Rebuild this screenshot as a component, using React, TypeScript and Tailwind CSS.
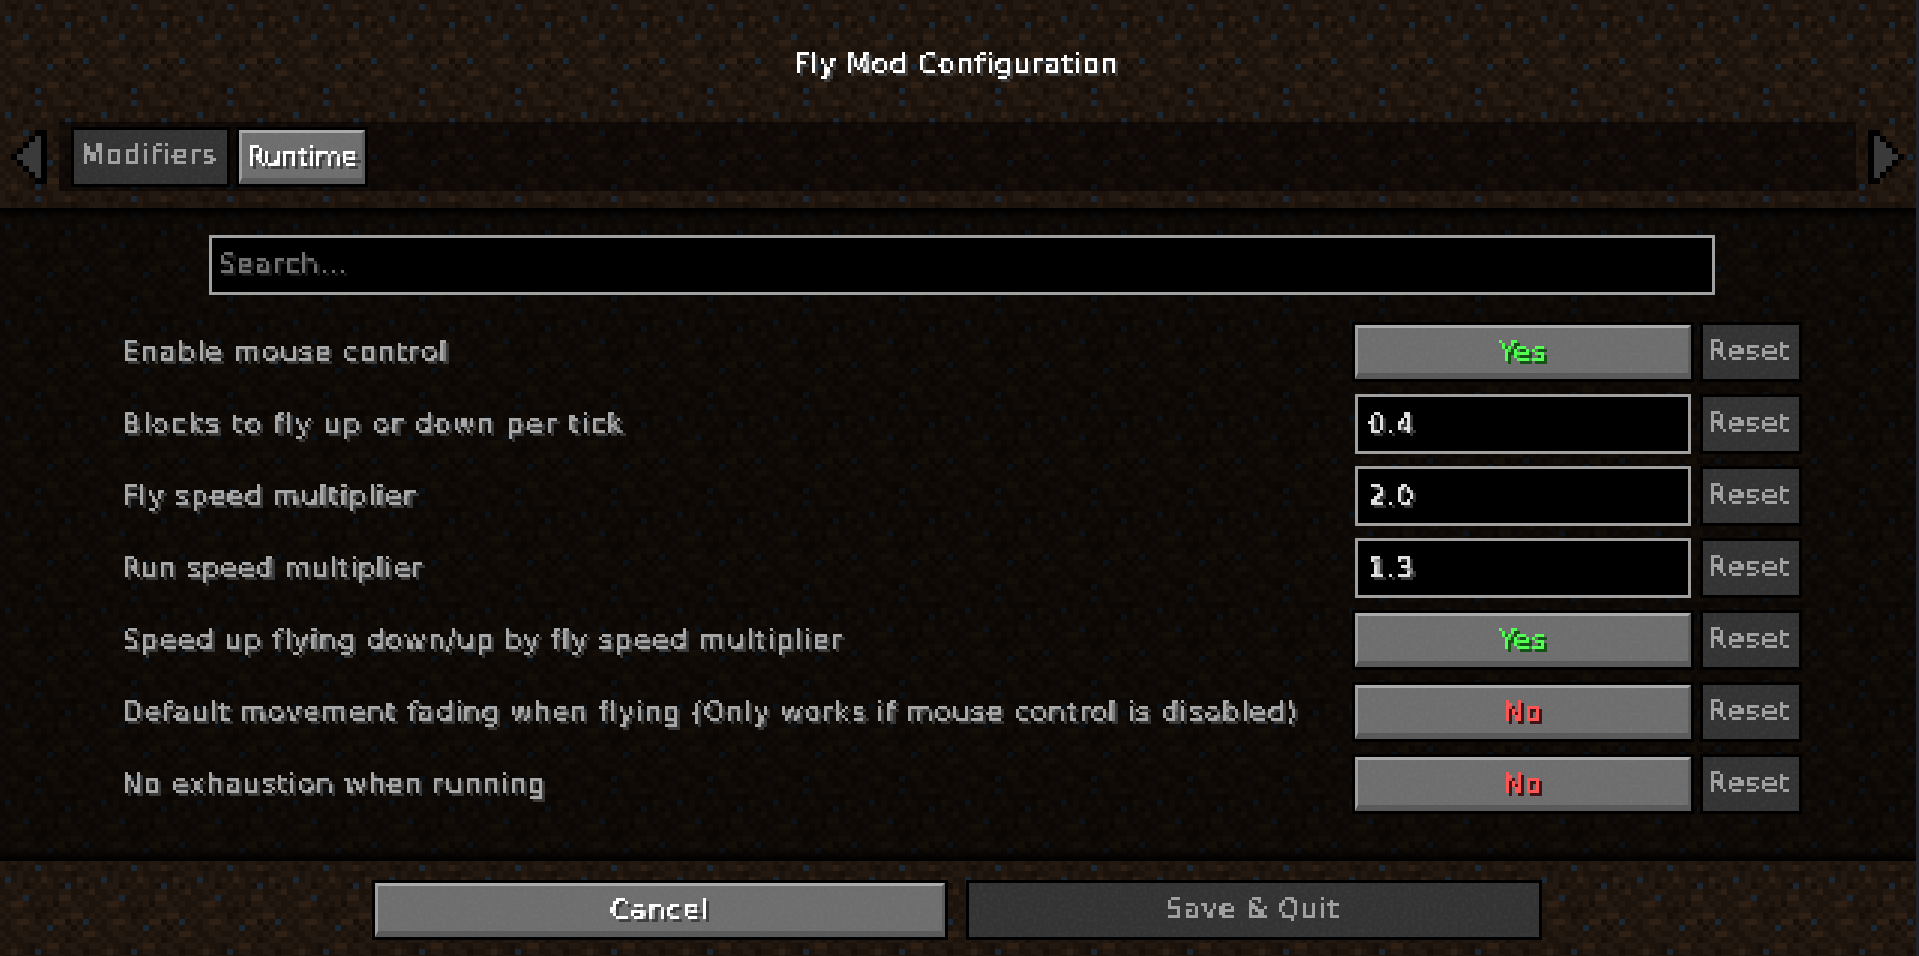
import React from "react";

const TILE = [
  "2101214212232121",
  "2212111211110112",
  "1412121321211321",
  "1222012121041202",
  "1121221111221123",
  "2112411221331211",
  "1233212120222121",
  "2122111012112211",
  "1211220121223312",
  "2123321213302141",
  "1122122141220212",
  "2112211212112133",
  "1211222121201221",
  "2121101233122112",
  "1232104122112201",
  "2121221112211212",
];
const COLORS: Record<string, string> = { "0": "#150e09", "1": "#1c130c", "2": "#241910", "3": "#2e2015", "4": "#1b2732" };

function Defs() {
  return (
    <svg className="absolute w-0 h-0" aria-hidden="true">
      <defs>
        <pattern id="dirt" x="-1" y="4" width="96" height="96" patternUnits="userSpaceOnUse">
          {TILE.flatMap((row, r) =>
            row.split("").map((c, i) => <rect key={`${r}-${i}`} x={i * 6} y={r * 6} width="6.1" height="6.1" fill={COLORS[c]} />)
          )}
        </pattern>
        <filter id="mc" x="0" y="0" width="100%" height="100%" colorInterpolationFilters="sRGB">
          <feFlood x="1" y="1" width="1" height="1" />
          <feComposite width="3" height="3" />
          <feTile result="grid" />
          <feComposite in="SourceGraphic" in2="grid" operator="in" />
          <feComponentTransfer>
            <feFuncA type="discrete" tableValues="0 1 1 1 1 1 1 1" />
          </feComponentTransfer>
          <feMorphology operator="dilate" radius="1" />
        </filter>
        <filter id="noise" x="0" y="0" width="100%" height="100%" colorInterpolationFilters="sRGB">
          <feTurbulence type="fractalNoise" baseFrequency="0.28" numOctaves="2" seed="4" />
          <feColorMatrix values="0 0 0 0 0.5  0 0 0 0 0.5  0 0 0 0 0.5  1.6 0 0 0 -0.65" />
        </filter>
      </defs>
    </svg>
  );
}

function Dirt() {
  return (
    <svg className="absolute inset-0 w-full h-full" aria-hidden="true">
      <rect width="100%" height="100%" fill="url(#dirt)" />
    </svg>
  );
}

function Noise({ strong }: { strong?: boolean }) {
  return (
    <svg className={strong ? "absolute inset-0 w-full h-full opacity-40" : "absolute inset-0 w-full h-full opacity-15"} aria-hidden="true">
      <rect width="100%" height="100%" filter="url(#noise)" />
    </svg>
  );
}

/* Minecraft-style text: real text, snapped to 3px blocks by the svg filter */
function T({ children, className, track = "tracking-[1.4px]" }: { children: React.ReactNode; className: string; track?: string }) {
  return (
    <span className={`relative inline-block whitespace-pre pr-[6px] pt-[6px] pb-[3px] font-['DejaVu_Sans',sans-serif] text-[27px] leading-[30px] [filter:url(#mc)] ${track} ${className}`}>
      {children}
    </span>
  );
}

function Btn({ label, textClass, active, width, track }: { label: string; textClass: string; active?: boolean; width: string; track?: string }) {
  return (
    <div className={`border-[3px] border-black shrink-0 ${width}`}>
      {active ? (
        <div className="relative flex items-center justify-center h-[54px] bg-[#6e6e6e] border-solid border-t-[3px] border-l-[3px] border-r-[3px] border-b-[6px] border-t-[#ababab] border-l-[#9f9f9f] border-r-[#5d5d5d] border-b-[#5a5a5a]">
          <Noise strong />
          <T track={track} className={`pl-[6px] ${textClass}`}>{label}</T>
        </div>
      ) : (
        <div className="relative flex items-center justify-center h-[54px] bg-[#333333]">
          <Noise />
          <T track={track} className={`pl-[3px] -mt-[6px] ${textClass}`}>{label}</T>
        </div>
      )}
    </div>
  );
}

function Arrow({ flip }: { flip?: boolean }) {
  const black = "M0 0h12v6h6v6h6v6h6v6h6v6h-6v6h-6v6h-6v6h-6v6H0z";
  const gray = "M6 6h6v6h6v6h6v6h6v6h-6v6h-6v6h-6v6H6z";
  return (
    <svg width="36" height="54" viewBox="0 0 36 54" className={flip ? "shrink-0 -scale-x-100" : "shrink-0"} aria-hidden="true">
      <path d={black} fill="#000" />
      <path d={gray} fill="#3a3a3a" />
    </svg>
  );
}

const RESET = "text-[#a0a0a0]";
const WHITE = "text-white [text-shadow:3px_3px_0_#3f3f3f]";
const LABEL = "text-[#a8a8a8] [text-shadow:3px_3px_0_#3a3a3a] -mt-[3px] -ml-[2px]";
const YES = "text-[#55ff55] [text-shadow:3px_3px_0_#155215]";
const NO = "text-[#ff5555] [text-shadow:3px_3px_0_#3f1515]";

type Row = { label: string; kind: "yes" | "no" | "num"; value: string; track: string };
const ROWS: Row[] = [
  { label: "Enable mouse control", kind: "yes", value: "Yes", track: "tracking-[1.65px]" },
  { label: "Blocks to fly up or down per tick", kind: "num", value: "0.4", track: "tracking-[2.05px]" },
  { label: "Fly speed multiplier", kind: "num", value: "2.0", track: "tracking-[1.35px]" },
  { label: "Run speed multiplier", kind: "num", value: "1.3", track: "tracking-[1.1px]" },
  { label: "Speed up flying down/up by fly speed multiplier", kind: "yes", value: "Yes", track: "tracking-[1.6px]" },
  { label: "Default movement fading when flying (Only works if mouse control is disabled)", kind: "no", value: "No", track: "tracking-[1.37px]" },
  { label: "No exhaustion when running", kind: "no", value: "No", track: "tracking-[1.4px]" },
];

export default function App() {
  return (
    <div className="relative w-[1919px] h-[956px] overflow-hidden flex flex-col bg-black">
      <Defs />
      <header className="relative h-[208px] shrink-0 flex flex-col">
        <Dirt />
        <div className="relative h-[122px] shrink-0 flex justify-center pt-[43px]">
          <T className={WHITE}>Fly Mod Configuration</T>
        </div>
        <div className="relative flex items-center h-[69px] pl-[11px] pr-[15px]">
          <Arrow flip />
          <div className="relative flex-1 h-full mx-[12px] bg-black/50 flex items-center gap-[6px] pl-[12px]">
            <Btn label="Modifiers" textClass={RESET} width="w-[159px]" />
            <Btn label="Runtime" textClass={WHITE} active width="w-[132px]" track="tracking-[-0.3px]" />
          </div>
          <Arrow />
        </div>
      </header>

      <main className="relative h-[653px] shrink-0">
        <Dirt />
        <div className="absolute inset-0 bg-black/55" />
        <div className="absolute top-0 inset-x-0 h-[12px] bg-gradient-to-b from-black to-transparent" />
        <div className="absolute bottom-0 inset-x-0 h-[12px] bg-gradient-to-t from-black to-transparent" />
        <div className="relative flex flex-col pt-[27px]">
          <div className="ml-[209px] w-[1506px] h-[60px] border-[3px] border-[#a0a0a0] bg-black flex items-center pl-[6px]">
            <T className="text-[#707070] [text-shadow:3px_3px_0_#1c1c1c] -mt-[6px]">Search...</T>
          </div>
          <div className="flex flex-col gap-[12px] pt-[27px] pl-[124px]">
            {ROWS.map((r) => (
              <div key={r.label} className="flex items-center h-[60px]">
                <div className="w-[1228px] shrink-0">
                  <T track={r.track} className={LABEL}>{r.label}</T>
                </div>
                {r.kind === "num" ? (
                  <div className="w-[336px] h-[60px] mx-[3px] shrink-0 border-[3px] border-[#a0a0a0] bg-black flex items-center pl-[10px]">
                    <T className="text-[#e0e0e0] [text-shadow:3px_3px_0_#383838] -mt-[3px]">{r.value}</T>
                  </div>
                ) : (
                  <Btn label={r.value} textClass={r.kind === "yes" ? YES : NO} active width="w-[342px]" />
                )}
                <div className="ml-[6px]">
                  <Btn label="Reset" textClass={RESET} width="w-[102px]" />
                </div>
              </div>
            ))}
          </div>
        </div>
      </main>

      <footer className="relative flex-1 flex items-start justify-center gap-[18px] pt-[19px] pr-[5px]">
        <Dirt />
        <div className="relative">
          <Btn label="Cancel" textClass={WHITE} active width="w-[576px]" />
        </div>
        <div className="relative">
          <Btn label="Save & Quit" textClass={RESET} width="w-[576px]" track="tracking-[1.2px]" />
        </div>
      </footer>
      <div className="absolute top-0 right-0 w-[3px] h-full bg-[#20242a]" />
    </div>
  );
}
